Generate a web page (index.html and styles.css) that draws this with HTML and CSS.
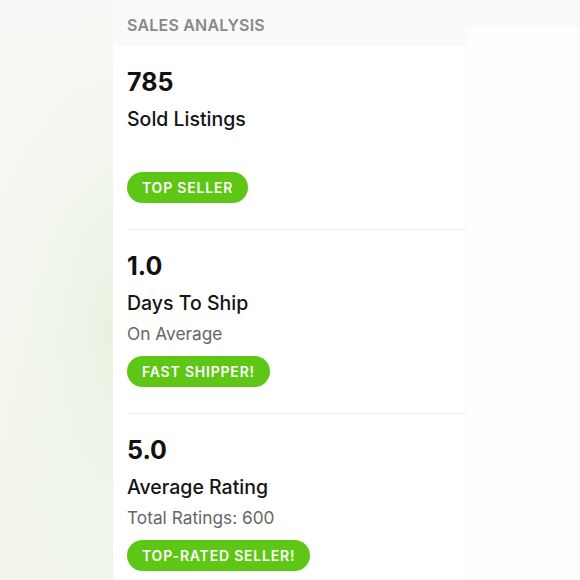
FILE: index.html
```html
<!DOCTYPE html>
<html>
<head>
<meta charset="utf-8">
<link rel="stylesheet" href="styles.css">
</head>
<body>
<div class="page">
  <div class="side-left"></div>
  <div class="panel">
    <div class="panel-head">SALES ANALYSIS</div>
    <div class="stat">
      <div class="value">785</div>
      <div class="label">Sold Listings</div>
      <div class="sub"></div>
      <span class="badge">TOP SELLER</span>
    </div>
    <div class="stat">
      <div class="value">1.0</div>
      <div class="label">Days To Ship</div>
      <div class="sub">On Average</div>
      <span class="badge">FAST SHIPPER!</span>
    </div>
    <div class="stat">
      <div class="value">5.0</div>
      <div class="label">Average Rating</div>
      <div class="sub">Total Ratings: 600</div>
      <span class="badge">TOP-RATED SELLER!</span>
    </div>
  </div>
  <div class="side-right"><div class="right-top"></div></div>
</div>
</body>
</html>
```
FILE: styles.css
```css
html, body {
  margin: 0;
  padding: 0;
  background: #fdfdfd;
}
body {
  font-family: Inter, Lato, "Liberation Sans", sans-serif;
}
.page {
  display: flex;
  width: 580px;
  height: 580px;
  overflow: hidden;
}
.side-left {
  width: 113px;
  flex: none;
  background:
    radial-gradient(ellipse 140px 320px at 120px 330px, #eaf1e1 0%, rgba(238,244,232,0.6) 50%, rgba(250,251,248,0) 100%),
    linear-gradient(180deg, #f8f9f6 0%, #f3f6ee 60%, #f0f4ea 100%);
}
.panel {
  width: 354px;
  flex: none;
  background: #ffffff;
}
.side-right {
  flex: 1;
  background: #fefefe;
}
.right-top {
  height: 28px;
  background: #fafafa;
}
.panel-head {
  height: 46px;
  box-sizing: border-box;
  padding: 15px 0 0 14px;
  background: #fafafa;
  color: #8b8885;
  font-size: 16px;
  font-weight: 600;
  letter-spacing: 0.2px;
  line-height: 20px;
}
.stat {
  margin-left: 14px;
  padding: 21px 0 26px;
  border-bottom: 1px solid #efefef;
  display: flex;
  flex-direction: column;
  align-items: flex-start;
}
.stat:last-child {
  border-bottom: none;
}
.value {
  font-size: 25px;
  font-weight: 700;
  line-height: 30px;
  color: #111;
}
.label {
  margin-top: 7px;
  font-size: 19.5px;
  font-weight: 500;
  line-height: 30px;
  color: #141414;
}
.sub {
  margin-top: 1px;
  height: 30px;
  font-size: 17.3px;
  line-height: 30px;
  color: #666;
}
.badge {
  margin-top: 7px;
  height: 31px;
  line-height: 31px;
  padding: 0 15px;
  border-radius: 16px;
  background: #5ec614;
  color: #fff;
  font-size: 14px;
  font-weight: 600;
  letter-spacing: 0.8px;
}
```
